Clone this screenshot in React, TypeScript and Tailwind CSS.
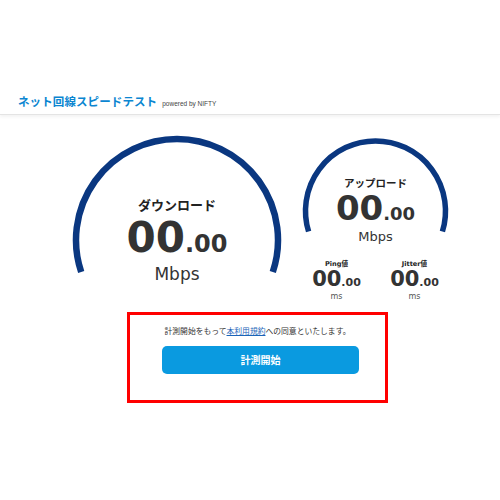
const jp = "font-['Noto_Sans_CJK_JP','Noto_Sans',sans-serif]";
const num = "font-['DejaVu_Sans','Noto_Sans_CJK_JP',sans-serif]";

function Header() {
  return (
    <header className="pt-[93px] pb-[5px] pl-[18px] border-b border-[#e4e4e4] shadow-[0_2px_3px_rgba(0,0,0,0.05)] flex items-baseline gap-[5px]">
      <h1 className={`${jp} text-[11.5px] leading-[16px] font-bold text-[#0b86d1] tracking-[0.1px]`}>
        ネット回線スピードテスト
      </h1>
      <span className="font-['Liberation_Sans',sans-serif] text-[6.5px] text-[#444]">powered by NIFTY</span>
    </header>
  );
}

function BigGauge() {
  return (
    <div className="relative w-[212px] shrink-0">
      <svg className="absolute left-0 top-0" width="212" height="146" viewBox="0 0 212 146">
        <path d="M 10.2 138 A 101 101 0 1 1 201.8 138" fill="none" stroke="#0a3780" strokeWidth="6.5" />
      </svg>
      <div className="relative flex flex-col items-center pt-[63px]">
        <div className={`${jp} text-[13px] leading-[16px] font-bold text-[#222]`}>ダウンロード</div>
        <div className={`${num} mt-[3.5px] text-[42px] leading-[42px] font-bold text-[#333]`}>
          00<span className="text-[24px] leading-none">.00</span>
        </div>
        <div className={`${num} mt-[5.5px] text-[17px] leading-[20px] text-[#333]`}>Mbps</div>
      </div>
    </div>
  );
}

function SmallStat({ label }: { label: string }) {
  return (
    <div className="flex flex-col items-center">
      <div className={`${num} text-[6.6px] leading-[10px] font-bold text-[#222]`}>{label}</div>
      <div className={`${num} mt-[0.2px] text-[21px] leading-[21px] font-bold text-[#333]`}>
        00<span className="text-[11px] leading-none">.00</span>
      </div>
      <div className={`${num} mt-[1.3px] text-[8px] leading-[11px] text-[#555]`}>ms</div>
    </div>
  );
}

function UploadColumn() {
  return (
    <div className="w-[151px] shrink-0 mt-[2px] flex flex-col">
      <div className="relative">
        <svg className="absolute left-0 top-0" width="151" height="100" viewBox="0 0 151 100">
          <path d="M 8.6 95.5 A 70 70 0 1 1 142.4 95.5" fill="none" stroke="#0a3780" strokeWidth="5.5" />
        </svg>
        <div className="relative flex flex-col items-center pt-[40px]">
          <div className={`${jp} text-[10.5px] leading-[14px] font-bold text-[#222]`}>アップロード</div>
          <div className={`${num} mt-[1.3px] text-[34px] leading-[34px] font-bold text-[#333]`}>
            00<span className="text-[18px] leading-none">.00</span>
          </div>
          <div className={`${num} mt-[3.7px] text-[13px] leading-[16px] text-[#333]`}>Mbps</div>
        </div>
      </div>
      <div className="mt-[14px] grid grid-cols-2 w-[156px] -ml-[2.5px]">
        <SmallStat label="Ping値" />
        <SmallStat label="Jitter値" />
      </div>
    </div>
  );
}

export default function App() {
  return (
    <div className="w-[500px] h-[500px] bg-white overflow-hidden">
      <Header />
      <main className="pt-[19px] pl-[71px] flex gap-[17px] items-start">
        <BigGauge />
        <UploadColumn />
      </main>
      <section className="mt-[9.5px] ml-[127px] w-[261px] h-[91px] border-[3px] border-[#ff0000] flex flex-col">
        <p className={`${jp} pt-[10px] text-center text-[7.8px] leading-[12px] text-[#333]`}>
          計測開始をもって<span className="text-[#1a64b8] underline">本利用規約</span>への同意といたします。
        </p>
        <button className={`${jp} mt-[9px] ml-[32px] w-[197px] h-[28px] rounded-[5px] bg-[#0a9ae0] text-white text-[10px] font-bold`}>
          計測開始
        </button>
      </section>
    </div>
  );
}
